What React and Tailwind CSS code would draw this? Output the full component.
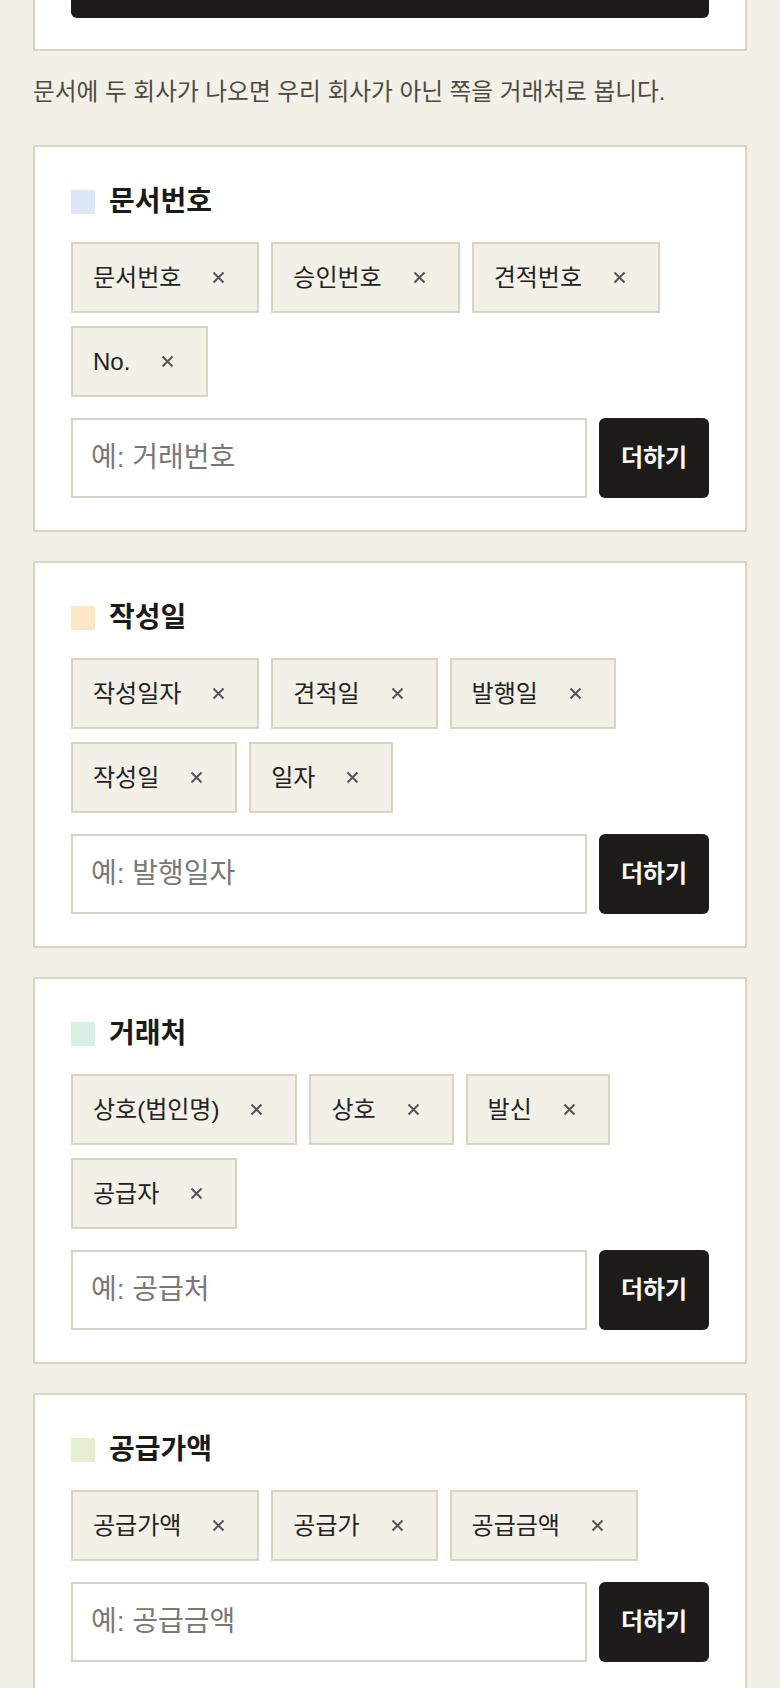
import { useState } from 'react';

const font = { fontFamily: '"Liberation Sans", "Noto Sans CJK KR", sans-serif' };

const initialGroups = [
  { id: 'docNo', title: '문서번호', marker: 'bg-[#dce8f6]', tags: ['문서번호', '승인번호', '견적번호', 'No.'], placeholder: '예: 거래번호' },
  { id: 'date', title: '작성일', marker: 'bg-[#fce8c8]', tags: ['작성일자', '견적일', '발행일', '작성일', '일자'], placeholder: '예: 발행일자' },
  { id: 'partner', title: '거래처', marker: 'bg-[#d8efe4]', tags: ['상호(법인명)', '상호', '발신', '공급자'], placeholder: '예: 공급처' },
  { id: 'supply', title: '공급가액', marker: 'bg-[#e5eed0]', tags: ['공급가액', '공급가', '공급금액'], placeholder: '예: 공급금액' },
];

function KeywordCard({ group, onRemove, onAdd }) {
  const [value, setValue] = useState('');

  return (
    <div className="bg-white border-2 border-[#d6d4c3] pt-9 px-9 pb-8 mb-[29px]">
      <div className="flex items-center h-[38px]">
        <span className={`w-6 h-6 mr-[14px] ${group.marker}`}></span>
        <h3 className="text-[28px] font-bold text-[#1b1a18]">{group.title}</h3>
      </div>

      <div className="flex flex-wrap gap-x-3 gap-y-[13px] mt-[21px]">
        {group.tags.map((tag) => (
          <div key={tag} className="h-[71px] flex items-center bg-[#f3f0e8] border-2 border-[#d6d4c3] pl-5 pr-[32px] text-[24px] text-[#222]">
            <span>{tag}</span>
            <button onClick={() => onRemove(group.id, tag)} className="ml-[31px] text-[#555]">
              <svg width="13" height="13" viewBox="0 0 13 13" className="block">
                <path d="M1.5 1.5L11.5 11.5M11.5 1.5L1.5 11.5" stroke="currentColor" strokeWidth="2" />
              </svg>
            </button>
          </div>
        ))}
      </div>

      <div className="flex gap-3 mt-[21px]">
        <input
          value={value}
          onChange={(e) => setValue(e.target.value)}
          placeholder={group.placeholder}
          className="flex-1 min-w-0 h-20 border-2 border-[#d6d4c3] px-[18px] text-[28px] text-[#222] placeholder:text-[#7b7874] outline-none"
          style={font}
        />
        <button
          onClick={() => { onAdd(group.id, value); setValue(''); }}
          className="w-[110px] h-20 rounded-md bg-[#1e1c1a] text-white text-[24px] font-bold"
        >
          더하기
        </button>
      </div>
    </div>
  );
}

export default function App() {
  const [groups, setGroups] = useState(initialGroups);

  const removeTag = (id, tag) =>
    setGroups((gs) => gs.map((g) => (g.id === id ? { ...g, tags: g.tags.filter((t) => t !== tag) } : g)));

  const addTag = (id, value) => {
    if (!value.trim()) return;
    setGroups((gs) => gs.map((g) => (g.id === id ? { ...g, tags: [...g.tags, value.trim()] } : g)));
  };

  return (
    <div className="min-h-screen bg-[#f3f0e8] px-[33px]" style={font}>
      {/* previous card, scrolled mostly out of view */}
      <div className="bg-white border-2 border-t-0 border-[#d6d4c3] px-9 pb-[31px]">
        <div className="h-[18px] bg-[#1e1c1a] rounded-b-md"></div>
      </div>

      <p className="mt-[24px] mb-[36px] text-[23.7px] leading-[34px] text-[#4d4943]">
        문서에 두 회사가 나오면 우리 회사가 아닌 쪽을 거래처로 봅니다.
      </p>

      {groups.map((g) => (
        <KeywordCard key={g.id} group={g} onRemove={removeTag} onAdd={addTag} />
      ))}
    </div>
  );
}
